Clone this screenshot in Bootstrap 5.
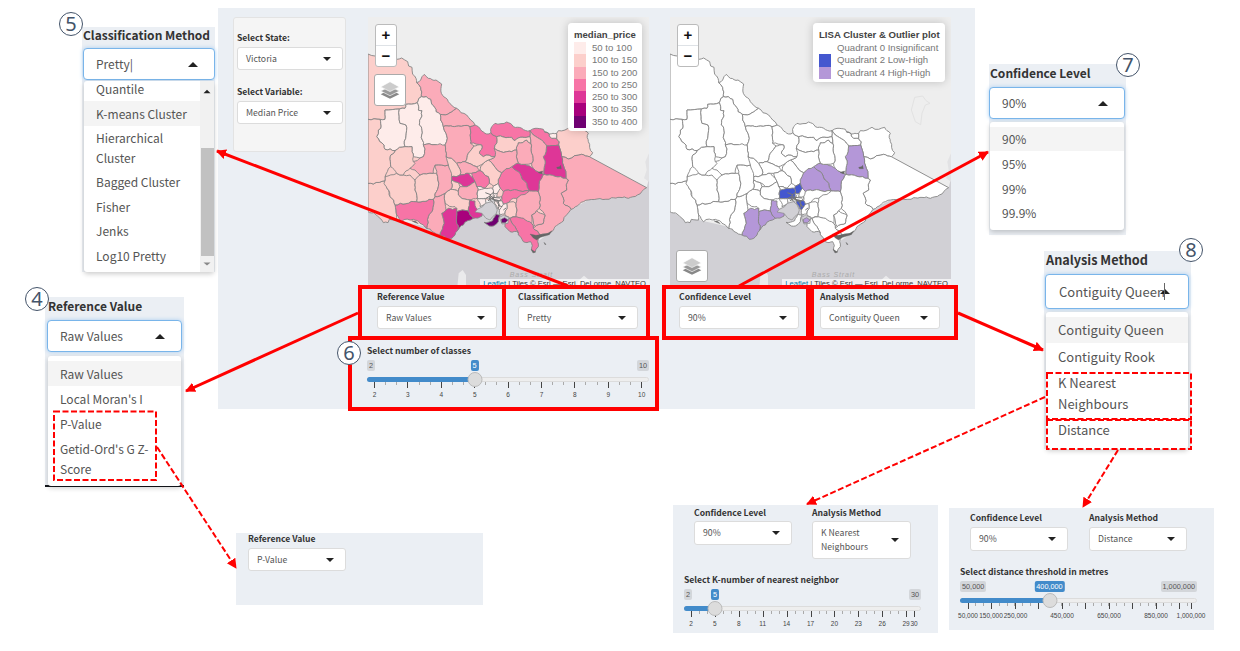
<!DOCTYPE html>
<html lang="en">
<head>
<meta charset="utf-8">
<title>Map controls overview</title>
<link href="https://cdn.jsdelivr.net/npm/bootstrap@5.3.0/dist/css/bootstrap.min.css" rel="stylesheet">
<style>
body{width:1240px;height:651px;overflow:hidden;background:#fff;font-family:"Noto Sans CJK SC","Open Sans",sans-serif;color:#333;position:relative}
.pane{position:absolute;background:#ebeff4}
.lbl{font-weight:700;font-size:8.6px;line-height:14px;height:14px;white-space:nowrap;color:#333}
.pick{background:#fff;border:1px solid #dcdcdc;border-radius:3px;height:23px;padding:0 11px 0 8px;font-size:8.7px;line-height:14px;color:#555;white-space:nowrap}
.tri{width:0;height:0;border:4px solid transparent;border-top:4.5px solid #222;border-bottom:0;flex:none}
.tri.up{border-top:0;border-bottom:4.5px solid #222}
/* opened drop-downs */
.pop{font-size:12px;color:#555}
.pop .lbl{font-size:12px;line-height:15px;height:15px}
.pop .pick{height:32px;border:1px solid #79b5ea;box-shadow:0 0 4px #a9cdf0;border-radius:4px;font-size:12px;padding:0 16px 0 12px}
.pop .tri{border-left-width:5px;border-right-width:5px;border-bottom-width:5px}
.menu{background:#fff;border-radius:3px;box-shadow:0 2px 5px #0003}
.menu div.it{padding-left:12px;display:flex;align-items:center;white-space:nowrap;line-height:16px}
.pop.wide,.pop.wide .pick{font-size:13px}
.pop.wide .lbl{font-size:12.7px}
.hl{background:#f4f4f4}
.num{position:absolute;width:24px;height:24px;border:1.3px solid #44546a;border-radius:50%;background:#fff;color:#44546a;font:20px/21px "Noto Sans",sans-serif;text-align:center;z-index:5}
#over{position:absolute;left:0;top:0;z-index:4}
/* range sliders */
.rng{position:relative;font-family:"Liberation Sans",sans-serif;height:38px}
.rng *{position:absolute;white-space:nowrap}
.tag{top:0;height:11px;border-radius:2px;background:#d3d6da;color:#555;font-size:7.3px;line-height:11px;padding:0 2px}
.tag.cur{background:#428bca;color:#fff;transform:translateX(-50%)}
.bar{top:17px;left:0;right:0;height:5px;border-radius:3px;background:#eee;border:1px solid #dcdcdc}
.fillb{top:17px;left:0;height:5px;border-radius:3px 0 0 3px;background:#428bca}
.knob{top:11.5px;width:15px;height:15px;border-radius:50%;background:#dcdcdc;border:1px solid #bbb;transform:translateX(-50%)}
.tk{top:22px;width:1px;height:3px;background:#aaa}
.tk.big{height:6px;background:#444}
.tn{top:30px;font-size:6.5px;line-height:9px;color:#444;transform:translateX(-50%)}
/* maps */
.mapbox{position:relative;width:281px;height:270px;overflow:hidden}
.mapbox svg.geo{display:block}
.ctl{position:absolute;left:7px;width:22px;background:#fff;border:1px solid #bbb;border-radius:3px;font:bold 15px/20px "Liberation Sans",sans-serif;color:#111;text-align:center}
.lay{position:absolute;left:6px;width:32px;height:32px;background:#fff;border:1px solid #aaa;border-radius:3px}
.key{position:absolute;background:#fffffff2;border-radius:4px;box-shadow:0 0 10px #0003;font:9.6px/12.3px "Liberation Sans",sans-serif;color:#777;padding:5px 5px 3px 6px;white-space:nowrap}
.key b{color:#444;display:block;line-height:14px}
.key i{width:12px;height:12.3px;display:inline-block;flex:none}
.attr{position:absolute;right:0;bottom:0;background:#ffffffb3;font:7.6px/9px "Liberation Sans",sans-serif;height:8px;padding:0 3px;color:#333;white-space:nowrap}
.attr span{color:#0078a8}
.side{width:113px;height:135px;background:#f5f5f5;border:1px solid #e3e3e3;border-radius:3px;padding:12px 2px 0 3px}
</style>
</head>
<body>

<!-- main application panel -->
<div class="pane d-flex" style="left:218px;top:8px;width:757px;height:401px;padding:9px 0 0 15px">
  <div class="side">
    <div class="lbl">Select State:</div>
    <div class="pick d-flex align-items-center justify-content-between" style="margin-top:3px">Victoria<span class="tri"></span></div>
    <div class="lbl" style="margin-top:14px">Select Variable:</div>
    <div class="pick d-flex align-items-center justify-content-between" style="margin-top:3px">Median Price<span class="tri"></span></div>
  </div>
  <div style="margin-left:22px;width:281px">
    <div class="mapbox">
      <svg class="geo" id="m1" width="281" height="270" viewBox="24 21 843 810"></svg>
      <div class="ctl" style="top:7px;height:43px"><div class="border-bottom" style="height:21px">+</div>−</div>
      <div class="lay" style="top:57px"><svg width="30" height="30" viewBox="0 0 29 29"><use href="#stack"/></svg></div>
      <div class="key" id="k1" style="left:200px;top:6px"></div>
      <div class="attr"><span>Leaflet</span> | Tiles © Esri — Esri, DeLorme, NAVTEQ</div>
    </div>
    <div class="d-flex" style="margin:2px 0 0 9px;gap:21px">
      <div style="width:120px"><div class="lbl">Reference Value</div><div class="pick d-flex align-items-center justify-content-between" style="margin-top:3px">Raw Values<span class="tri"></span></div></div>
      <div style="width:120px"><div class="lbl">Classification Method</div><div class="pick d-flex align-items-center justify-content-between" style="margin-top:3px">Pretty<span class="tri"></span></div></div>
    </div>
    <div class="lbl" style="margin:14px 0 3px -1px">Select number of classes</div>
    <div class="rng" id="r1" style="margin-left:-1px"></div>
  </div>
  <div style="margin-left:21px;width:281px">
    <div class="mapbox">
      <svg class="geo" id="m2" width="281" height="270" viewBox="24 21 843 810"></svg>
      <div class="ctl" style="top:7px;height:43px"><div class="border-bottom" style="height:21px">+</div>−</div>
      <div class="lay" style="top:233px"><svg width="30" height="30" viewBox="0 0 29 29"><use href="#stack"/></svg></div>
      <div class="key" id="k2" style="left:143px;top:6px"></div>
      <div class="attr"><span>Leaflet</span> | Tiles © Esri — Esri, DeLorme, NAVTEQ</div>
    </div>
    <div class="d-flex" style="margin:2px 0 0 9px;gap:21px">
      <div style="width:120px"><div class="lbl">Confidence Level</div><div class="pick d-flex align-items-center justify-content-between" style="margin-top:3px">90%<span class="tri"></span></div></div>
      <div style="width:120px"><div class="lbl">Analysis Method</div><div class="pick d-flex align-items-center justify-content-between" style="margin-top:3px">Contiguity Queen<span class="tri"></span></div></div>
    </div>
  </div>
</div>

<!-- 5: classification menu -->
<div class="pane pop" style="left:82px;top:27px;width:133px;height:245px;padding:0 0 0 1px">
  <div class="lbl">Classification Method</div>
  <div class="pick d-flex align-items-center justify-content-between" style="margin-top:6px">Pretty|<span class="tri up"></span></div>
  <div class="menu d-flex" style="margin:1px 1px 0;height:191px">
    <div class="flex-fill">
      <div class="it" style="height:16px">Quantile</div>
      <div class="it hl" style="height:25px;margin-top:4px">K-means Cluster</div>
      <div class="it" style="height:24px">Hierarchical</div>
      <div class="it" style="height:15px">Cluster</div>
      <div class="it" style="height:34px">Bagged Cluster</div>
      <div class="it" style="height:15px">Fisher</div>
      <div class="it" style="height:34px">Jenks</div>
      <div class="it" style="height:15px">Log10 Pretty</div>
    </div>
    <div class="d-flex flex-column align-items-center" style="width:14px;background:#f1f1f1">
      <span class="tri up" style="margin-top:8px;transform:scale(.7)"></span>
      <div style="width:13px;height:108px;background:#c1c1c1;margin-top:54px"></div>
      <span class="tri" style="margin-top:6px;opacity:.5;transform:scale(.7)"></span>
    </div>
  </div>
</div>

<!-- 4: reference value menu -->
<div class="pane pop" style="left:45px;top:297px;width:139px;height:190px;padding:1px 2px 0;border-bottom:2px solid #14171c">
  <div class="lbl" style="margin-left:1px">Reference Value</div>
  <div class="pick d-flex align-items-center justify-content-between" style="margin-top:7px">Raw Values<span class="tri up"></span></div>
  <div class="menu" style="margin:4px 1px 0;height:130px;padding-top:5px">
    <div class="it hl" style="height:25px">Raw Values</div>
    <div class="it" style="height:25px">Local Moran's I</div>
    <div class="it" style="height:26px">P-Value</div>
    <div class="it" style="height:24px">Getid-Ord's G Z-</div>
    <div class="it" style="height:15px">Score</div>
  </div>
</div>

<!-- 7: confidence menu -->
<div class="pane pop" style="left:989px;top:64px;width:137px;height:171px;padding:1px 1px 0 0">
  <div class="lbl" style="margin-left:1px">Confidence Level</div>
  <div class="pick d-flex align-items-center justify-content-between" style="margin-top:7px">90%<span class="tri up"></span></div>
  <div class="menu" style="margin:3px 1px 0;height:108px;padding-top:5px">
    <div class="it hl" style="height:24px">90%</div>
    <div class="it" style="height:25px">95%</div>
    <div class="it" style="height:25px">99%</div>
    <div class="it" style="height:24px">99.9%</div>
  </div>
</div>

<!-- 8: analysis menu -->
<div class="pane pop wide" style="left:1044px;top:251px;width:147px;height:198px;padding:1px 2px 0 1px">
  <div class="lbl" style="margin-left:1px">Analysis Method</div>
  <div class="pick d-flex align-items-center justify-content-between" style="margin-top:7px;height:35px;padding-left:13px;padding-right:18px">Contiguity Queen<span class="tri up" style="margin-left:-9px"></span></div>
  <div class="menu" style="margin:3px 1px 0;height:137px;padding-top:5px">
    <div class="it hl" style="height:26px">Contiguity Queen</div>
    <div class="it" style="height:27px">Contiguity Rook</div>
    <div class="it" style="height:26px">K Nearest</div>
    <div class="it" style="height:15px">Neighbours</div>
    <div class="it" style="height:38px">Distance</div>
  </div>
</div>

<!-- variants of the control row -->
<div class="pane" style="left:236px;top:533px;width:247px;height:72px;padding-left:12px">
  <div class="lbl" style="margin-top:-2px">Reference Value</div>
  <div class="pick d-flex align-items-center justify-content-between" style="margin-top:3px;width:98px">P-Value<span class="tri"></span></div>
</div>

<div class="pane" style="left:673px;top:505px;width:265px;height:128px;padding-left:11px">
  <div class="d-flex" style="padding-left:10px;gap:20px;height:67px">
    <div style="width:98px"><div class="lbl">Confidence Level</div><div class="pick d-flex align-items-center justify-content-between" style="margin-top:2px;height:24px">90%<span class="tri"></span></div></div>
    <div style="width:99px"><div class="lbl">Analysis Method</div><div class="pick d-flex align-items-center justify-content-between" style="margin-top:2px;height:38px">K Nearest<br>Neighbours<span class="tri"></span></div></div>
  </div>
  <div class="lbl">Select K-number of nearest neighbor</div>
  <div class="rng" id="r2" style="margin-top:3px"></div>
</div>

<div class="pane" style="left:949px;top:508px;width:265px;height:122px;padding:2px 0 0 11px">
  <div class="d-flex" style="padding-left:10px;gap:21px;height:54px">
    <div style="width:98px"><div class="lbl">Confidence Level</div><div class="pick d-flex align-items-center justify-content-between" style="margin-top:3px;height:24px">90%<span class="tri"></span></div></div>
    <div style="width:98px"><div class="lbl">Analysis Method</div><div class="pick d-flex align-items-center justify-content-between" style="margin-top:3px;height:24px">Distance<span class="tri"></span></div></div>
  </div>
  <div class="lbl">Select distance threshold in metres</div>
  <div class="rng" id="r3" style="margin-top:3px"></div>
</div>

<!-- callout frames and arrows -->
<svg id="over" width="1240" height="651" fill="none" stroke="#f00">
  <defs>
    <marker id="ah" markerUnits="userSpaceOnUse" markerWidth="12" markerHeight="12" refX="9" refY="5" orient="auto"><path d="M0 0L10 5L0 10Z" fill="#f00" stroke="none"/></marker>
    <g id="stack" stroke="none"><path d="M5.500 18.500l9-4.500 9 4.500-9 4.500z" fill="#888"/><path d="M5.500 15.500l9-4.500 9 4.500-9 4.500z" fill="#999" stroke="#fff" stroke-width=".6"/><path d="M5.500 11.500l9-5 9 5-9 4.500z" fill="#ccc" stroke="#fff" stroke-width=".6"/></g>
  </defs>
  <g stroke-width="4"><path d="M360 287H504V338H360ZM504 287H648V338H504ZM664 287H808V338H664ZM812 287H956V338H812ZM350 338H657V409H350Z"/></g>
  <g stroke-width="3"><path d="M568 286L217 151" marker-end="url(#ah)"/><path d="M358 313L186 391" marker-end="url(#ah)"/><path d="M739 286L988 152" marker-end="url(#ah)"/><path d="M958 313L1043 350" marker-end="url(#ah)"/></g>
  <g stroke-width="2" stroke-dasharray="6 2.500"><path d="M54 411.500H156V480H54ZM1047 373H1191V419H1047ZM1047 420H1191V449H1047Z"/><path d="M157 447L236 568" marker-end="url(#ah)"/><path d="M1045 397L807 504" marker-end="url(#ah)"/><path d="M1118 450L1083 507" marker-end="url(#ah)"/></g>
  <path d="M1164.500 283V300" stroke="#666" stroke-width="1"/>
</svg>
<div class="num" style="left:59px;top:12px">5</div>
<div class="num" style="left:25px;top:287px">4</div>
<div class="num" style="left:337px;top:341px">6</div>
<div class="num" style="left:1116px;top:53px">7</div>
<div class="num" style="left:1179px;top:238px">8</div>

<script>
// legends
const C=['#feecea','#fccfcb','#fbabb9','#f774a6','#de3697','#a8007c','#6f0071'];
k1.innerHTML='<b>median_price</b>'+C.map((c,i)=>`<div class="d-flex"><i style="background:${c}"></i><span style="margin-left:6px">${50+50*i} to ${100+50*i}</span></div>`).join('');
k2.innerHTML='<b>LISA Cluster &amp; Outlier plot</b>'+[['#fff','Quadrant 0 Insignificant'],['#4457cf','Quadrant 2 Low-High'],['#b497d8','Quadrant 4 High-High']].map(r=>`<div class="d-flex"><i style="background:${r[0]}"></i><span style="margin-left:6px">${r[1]}</span></div>`).join('');

// sliders: width, min, max, current, knob x, labelled ticks, minor ticks
function rng(el,w,min,max,cur,x,labels,big,small){
  el.style.width=w+'px';
  el.innerHTML=`<span class="tag" style="left:0">${min}</span><span class="tag" style="right:0">${max}</span><span class="tag cur" style="left:${x}px">${cur}</span><span class="bar"></span><span class="fillb" style="width:${x}px"></span>`
  +small.map(t=>`<span class="tk" style="left:${t}px"></span>`).join('')+big.map(t=>`<span class="tk big" style="left:${t}px"></span>`).join('')
  +`<span class="knob" style="left:${x}px"></span>`+labels.map(l=>`<span class="tn" style="left:${l[1]}px">${l[0]}</span>`).join('');
}
const seq=(a,s,n)=>Array.from({length:n},(_,i)=>a+s*i);
rng(r1,282,'2','10','5',107.500,seq(2,1,9).map((v,i)=>[v,7.500+33.400*i]),seq(7,33.400,9),seq(7,11.130,25));
rng(r2,237,'2','30','5',31,[...seq(2,3,9).map((v,i)=>[v,7+23.900*i]),['29',222],['30',230]],[...seq(7,23.900,10),230],seq(7,7.970,28));
rng(r3,237,'50,000','1,000,000','400,000',89.500,[['50,000',8],['150,000',31],['250,000',55.500],['450,000',102],['650,000',149],['850,000',196],['1,000,000',231]],[...seq(7.500,23.500,10),231],seq(7.500,7.830,29));

// municipality outlines: [colour index, cluster (p/b), points]
const R=[
[1,'','24,132 45,138 75,143 110,148 125,144 143,155 146,168 156,172 158,193 168,205 170,218 182,232 184,260 176,266 172,278 137,283 135,295 118,297 75,300 75,328 24,328'],
[2,'','170,218 182,210 186,200 193,193 205,205 228,210 245,222 244,250 262,268 265,275 290,295 270,308 241,313 228,305 215,282 212,268 188,264 184,260 182,232'],
[0,'','75,300 118,297 120,340 138,345 135,410 105,422 75,418 72,405 50,380 55,360 62,355 60,328 75,328'],
[0,'','118,297 135,295 137,283 172,278 175,300 186,302 186,318 178,345 184,350 185,375 190,405 194,430 180,444 160,440 156,410 135,410 138,345 120,340'],
[0,'','172,278 176,266 188,264 212,268 215,282 228,305 241,313 242,330 250,350 258,370 262,385 255,405 240,412 225,404 190,405 185,375 184,350 178,345 186,318 186,302 175,300'],
[2,'','241,313 270,308 290,295 320,315 345,345 330,350 295,348 250,355 242,330'],
[2,'','250,355 295,348 333,348 332,400 342,408 325,430 315,455 290,460 275,445 258,440 255,405 262,385'],
[3,'','333,348 345,345 380,372 393,368 398,375 410,380 403,415 410,430 405,440 370,440 358,430 365,405 332,400'],
[3,'','393,368 395,350 405,340 440,336 460,350 510,362 510,380 465,392 455,382 410,380 398,375'],
[3,'','510,362 525,355 550,358 568,378 575,385 590,385 598,395 596,405 560,408 545,390 520,375'],
[0,'','554,366 568,372 590,370 587,382 575,385'],
[1,'','590,370 595,362 615,360 630,352 650,358 668,352 685,370 685,395 698,428 688,440 665,433 625,447 605,440 596,405 598,395'],
[2,'','688,440 860,533 832,555 805,565 755,563 685,570 633,598 610,580 603,550 620,540 625,510 618,505 610,465 605,440 625,447 665,433'],
[4,'p','560,408 596,405 605,440 610,465 618,505 552,493 550,440'],
[2,'','552,493 618,505 625,510 620,540 603,550 610,580 633,598 610,633 575,665 540,675 520,655 550,640 555,615 538,595 540,560 535,545 545,505'],
[4,'p','455,470 475,460 495,463 520,475 552,493 545,505 530,545 508,543 500,520 480,490'],
[3,'p','415,520 420,500 425,488 455,470 480,490 500,520 508,543 470,540 445,540 430,545'],
[2,'','510,362 520,375 545,390 560,408 550,440 552,493 520,475 515,460 512,400'],
[2,'','475,398 500,390 512,400 515,460 495,463 475,455 470,420'],
[1,'','410,380 455,382 465,392 510,380 512,400 500,390 475,398 470,420 440,425 403,415'],
[2,'','403,415 440,425 470,420 475,455 455,470 425,488 400,465 385,450 405,440'],
[1,'','385,450 400,465 425,488 420,500 415,520 400,528 388,520 385,500 360,482 370,460'],
[1,'','325,430 342,408 365,405 358,430 370,440 405,440 385,450 370,460 350,470 315,455'],
[2,'','290,460 315,455 350,470 360,482 335,490 300,495 300,478'],
[1,'','258,440 275,445 290,460 300,478 300,495 275,500 258,490'],
[4,'','275,500 300,495 325,490 340,505 345,515 330,525 310,530 295,518 275,510'],
[3,'','335,490 360,482 385,500 388,520 375,535 350,530 345,515'],
[1,'','275,510 295,518 300,530 295,545 272,538'],
[2,'','300,530 310,530 345,520 350,535 352,565 330,570 295,555'],
[1,'','255,550 272,538 295,545 300,560 330,570 325,603 290,605 285,590 255,580'],
[0,'','352,535 375,530 380,545 375,565 355,568'],
[0,'b','355,540 375,532 398,535 400,550 410,560 375,565 355,565'],
[0,'b','398,535 415,522 421,535 412,550 400,552'],
[0,'','352,565 375,567 378,580 360,590'],
[4,'p','328,570 345,573 352,598 372,602 366,618 340,625 330,605'],
[5,'p','290,605 330,603 340,625 310,645 292,662'],
[4,'p','245,610 265,595 290,595 292,662 285,675 262,688 240,675 248,650'],
[2,'','225,560 255,550 258,600 245,610 248,650 240,675 200,655 205,620 218,600'],
[3,'','105,585 170,575 220,568 218,600 205,620 200,652 180,640 160,628 125,635 110,615'],
[1,'','24,520 40,522 75,512 90,560 105,585 110,615 110,630 88,628 84,638 70,638 60,625 45,612 24,605'],
[1,'','75,500 110,490 150,495 165,510 165,540 175,572 105,585 90,560 72,520'],
[1,'','165,510 180,495 230,490 235,530 225,555 220,568 175,572 165,540'],
[2,'','225,465 265,465 270,500 272,538 255,550 225,560 235,530'],
[2,'','190,405 225,404 255,405 258,440 262,465 225,465 220,490 180,495 165,480 150,475 160,455 190,440'],
[1,'','105,422 156,410 156,440 165,460 150,480 130,495 110,490 92,470 90,440'],
[1,'','24,328 60,328 62,355 50,380 72,405 80,418 105,422 90,440 92,470 75,500 70,515 40,525 24,518'],
[3,'','430,545 445,540 470,540 508,543 500,560 460,565 430,583 425,560'],
[1,'','440,580 460,575 468,580 468,620 450,625 438,618'],
[2,'','468,580 470,565 505,545 535,545 540,560 538,595 530,602 515,615 520,655 500,640 490,625 468,620'],
[2,'','515,615 530,602 555,615 550,640 525,650'],
[3,'','455,625 490,627 515,640 520,655 540,675 533,695 535,710 525,727 515,720 512,695 490,695 475,675'],
[3,'','430,630 450,625 465,650 475,668 450,665 435,650'],
[6,'','372,637 398,632 408,612 420,615 415,635 400,648 388,648'],
[0,'','421,585 436,583 434,612 422,610'],
[0,'','400,552 412,550 410,560 425,560 418,572 402,570'],
[0,'b','405,568 425,572 426,585 418,600 410,588']
];
// merge nearly coincident vertices, then add neighbours' vertices to edges so borders are shared
const V=[];
const snap=p=>{for(const v of V)if(Math.hypot(v[0]-p[0],v[1]-p[1])<6)return v;V.push(p);return p};
R.forEach(r=>r.p=r[2].split(' ').map(s=>snap(s.split(',').map(Number))));
function edge(a,b){
  const L=Math.hypot(b[0]-a[0],b[1]-a[1]),o=[];
  if(!L)return [a];
  for(const v of V){if(v===a||v===b)continue;
    const t=((v[0]-a[0])*(b[0]-a[0])+(v[1]-a[1])*(b[1]-a[1]))/L/L;
    const d=Math.abs((v[0]-a[0])*(b[1]-a[1])-(v[1]-a[1])*(b[0]-a[0]))/L;
    if(t>0.03&&t<.97&&d<5)o.push([t,v]);}
  return [a,...o.sort((x,y)=>x[0]-y[0]).map(x=>x[1])];
}
function wig(a,b){
  const L=Math.hypot(b[0]-a[0],b[1]-a[1]);
  if(L<11||L>120||(a[0]==24&&b[0]==24))return [a];
  const f=a[0]*1000+a[1]<b[0]*1000+b[1],p=f?a:b,q=f?b:a;
  const h=Math.sin(p[0]*12.9+p[1]*78.2+q[0]*3.7+q[1]*9.1)*43758,k=((h-Math.floor(h))-.5)*Math.min(9,L*.3);
  const m=[(a[0]+b[0])/2-(q[1]-p[1])/L*k,(a[1]+b[1])/2+(q[0]-p[0])/L*k];
  return [...wig(a,m),...wig(m,b)];
}
function outline(P){
  const o=[];P.forEach((a,i)=>o.push(...edge(a,P[(i+1)%P.length])));
  const w=[];o.forEach((a,i)=>w.push(...wig(a,o[(i+1)%o.length])));
  return 'M'+w.map(p=>p[0].toFixed(1)+','+p[1].toFixed(1)).join('L')+'Z';
}
const coast='<rect x="24" y="21" width="843" height="810" fill="#eee"/><path d="M24 600L60 625L110 630L200 650L262 680L330 620L345 605L375 580L400 570L420 610L460 640L525 700L575 665L633 598L685 570L755 563L832 555L860 533L867 505V831H24Z" fill="#d1d0d5"/><path d="M867 430L856 455L860 480L852 505L867 515Z" fill="#e2e2e4"/><path d="M292 831L296 790L308 780L318 795V831ZM655 812L672 797L690 812V831H650Z" fill="#eaeaec"/><text x="449" y="802" font-family="Liberation Sans" font-style="italic" font-size="21" letter-spacing="2.600" fill="#aaa">Bass Strait</text>';
// land under the municipalities, so that slivers between them stay filled
const land='M24 330L75 300L172 278L186 262L230 300L290 300L340 346L385 374L510 372L600 375L680 400L690 440L840 530L690 566L634 594L570 660L520 690L460 650L425 620L430 600L418 570L400 565L376 572L350 598L330 615L290 640L262 680L205 650L110 620L60 615L24 600Z';
const metro='<path d="M376 548l16 6l10-8M378 565l14-8l10 10M392 552l-4 16l10 8M404 556l-6 12l16 4l4 14M384 572l12-6l14 8l12-2M410 575l8 12l-4 10M398 562l22 2M388 560l20 14M414 586l12 4M430 600l8-6" fill="none" stroke="#777" stroke-width="3"/>';
const bits='<path d="M345 606L352 598L368 590L376 580L395 575L405 584L412 600L408 612L398 620L390 630L378 625L366 610Z" fill="#d1d0d5" stroke="#888" stroke-width="2"/><path d="M418 622l12-6l16 6l-2 18l-18 2z" fill="#d1d0d5" stroke="#888" stroke-width="2"/>';
const isles='<path d="M510 672l18 4l36-6l12-8l-8 12l-26 8l-12 8l-10-6zM534 487l14-4l-2 8l-9-2zM590 472l8-2l4-4l2 10l-12 0zM513 718l14 8l-8 3zM552 697l6 6l-3 1zM155 632l12 2l8 7l-12-4z" fill="#666" stroke="#666" stroke-width="1"/>';
function draw(el,second){
  el.innerHTML=coast+(second?'<path d="M758 262L782 258L792 272L804 280L790 285L780 310L776 344L760 335L748 300Z" fill="none" stroke="#e2e2e2" stroke-width="3"/>':'')
   +`<path d="${land}" fill="${second?'#fff':C[1]}"/>`
   +R.map(r=>`<path d="${outline(r.p)}" fill="${second?({p:'#b497d8',b:'#4457cf'}[r[1]]||'#fff'):C[r[0]]}" stroke="#858585" stroke-width="2.700" stroke-linejoin="round"/>`).join('')
   +metro+bits+`<path d="M424 628l10-5l10 7l-8 8l-11 0z" fill="${second?'#b497d8':C[6]}" stroke="#777" stroke-width="2"/>`+isles;
}
draw(m1,false);draw(m2,true);
</script>
<script src="https://cdn.jsdelivr.net/npm/bootstrap@5.3.0/dist/js/bootstrap.bundle.min.js"></script>
</body>
</html>
